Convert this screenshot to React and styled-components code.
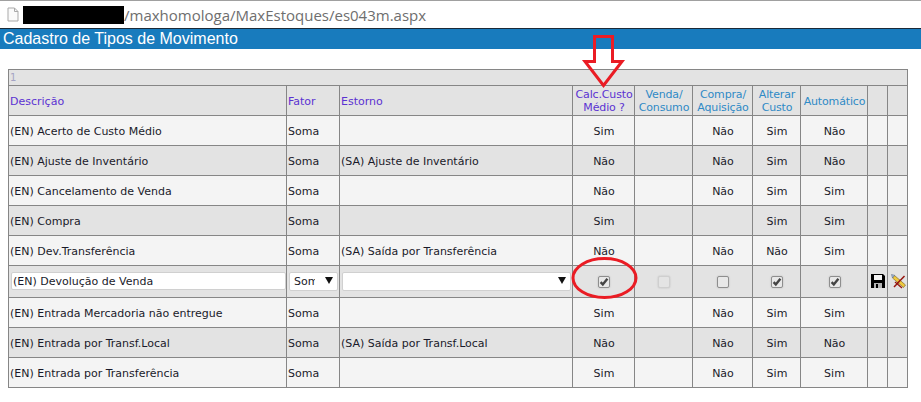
import React from 'react';
import styled, { createGlobalStyle } from 'styled-components';

const GlobalStyle = createGlobalStyle`
    html, body { margin: 0; padding: 0; background: #fff; }
    body { width: 921px; height: 402px; overflow: hidden; position: relative; }
`;

const AddressBar = styled.div`
    height: 28px;
    box-sizing: border-box;
    border-top: 1px solid #a0a0a0;
    padding: 0 0 0 7px;
    display: flex;
    align-items: center;
    font-family: "Open Sans", sans-serif;
    font-size: 15px;
    color: #6e6e6e;
`;

const Redacted = styled.span`
    width: 101px;
    height: 18px;
    margin-left: 4px;
    background: #000;
`;

const TitleBar = styled.h1`
    margin: 0;
    height: 21px;
    box-sizing: border-box;
    border-top: 1px solid #1b2a38;
    background: #187bbd;
    color: #fff;
    font-family: "Liberation Sans", sans-serif;
    font-weight: 400;
    font-size: 16px;
    line-height: 19px;
    padding-left: 3px;
`;

const Content = styled.div`
    padding: 20px 0 0 8px;
`;

const Grid = styled.table`
    border-collapse: collapse;
    table-layout: fixed;
    width: 899px;
    font-family: "DejaVu Sans", sans-serif;
    font-size: 11px;
    color: #1a1a2a;

    td, th {
        border: 1px solid #868686;
        padding: 1px 0 0 1px;
        font-weight: 400;
        overflow: hidden;
        white-space: nowrap;
    }
`;

const PagerRow = styled.tr`
    height: 16px;
    background: #e3e3e3;
    color: #a3a3c4;
    font-size: 10px;
    td { line-height: 14px; }
`;

const HeaderRow = styled.tr`
    height: 30px;
    background: #e3e3e3;
`;

const HeadCell = styled.th`
    text-align: ${({ $center }) => ($center ? 'center' : 'left')};
    color: ${({ $sorted }) => ($sorted ? '#5b32d2' : '#2f8ac6')};
    letter-spacing: ${({ $center }) => ($center ? '-0.15px' : '0')};
    line-height: 13px;
`;

const Row = styled.tr`
    height: ${({ $edit }) => ($edit ? '32px' : '30px')};
    background: ${({ $dark }) => ($dark ? '#e3e3e3' : '#f4f4f4')};
    ${({ $edit }) => $edit && 'td { padding: 0 0 1px 1px; }'}
`;

const ValueCell = styled.td`
    text-align: center;
`;

const TextInput = styled.input`
    display: block;
    box-sizing: border-box;
    width: 275px;
    height: 18px;
    margin-left: 1px;
    padding: 0 1px;
    border: 1px solid #d0d0d0;
    border-radius: 2px;
    background: #fff;
    font: 11px "DejaVu Sans", sans-serif;
    color: #1a1a2a;
`;

const SelectWrap = styled.div`
    position: relative;
    width: ${({ $w }) => $w}px;
    margin-left: 1px;
`;

const Select = styled.select`
    display: block;
    appearance: none;
    box-sizing: border-box;
    width: 100%;
    height: 19px;
    border: 1px solid #d0d0d0;
    border-radius: 2px;
    background: #fff;
    padding: 0 22px 0 4px;
    font: 11px "DejaVu Sans", sans-serif;
    color: #1a1a2a;
`;

const Arrow = styled.span`
    position: absolute;
    right: 5px;
    top: 5px;
    width: 0;
    height: 0;
    border-left: 4px solid transparent;
    border-right: 4px solid transparent;
    border-top: 7px solid #111;
`;

const Check = styled.span`
    display: inline-flex;
    align-items: center;
    justify-content: center;
    vertical-align: middle;
    box-sizing: border-box;
    width: 12px;
    height: 12px;
    border: 1px solid ${({ $disabled }) => ($disabled ? '#cfcfcf' : '#8e8e8e')};
    border-radius: 2px;
    background: ${({ $disabled }) => ($disabled ? '#e4e4e4' : '#e8e8e8')};
    box-shadow: 0 0 2px #bcbcbc;
`;

const IconCell = styled.td`
    text-align: center;
    svg { display: block; margin: 0 auto; }
`;

const Annotation = styled.svg`
    position: absolute;
    left: 0;
    top: 0;
    pointer-events: none;
`;

const PageIcon = () => (
    <svg width="12" height="15" viewBox="0 0 12 15">
        <path d="M1 1h6.5L11 4.5V14H1z" fill="#fafafa" stroke="#a9a9a9" />
        <path d="M7.5 1v3.5H11" fill="none" stroke="#a9a9a9" />
    </svg>
);

const CheckBox = ({ checked, disabled }) => (
    <Check $disabled={disabled}>
        {checked && (
            <svg width="10" height="10" viewBox="0 0 10 10">
                <path d="M1.6 5.2l2.2 2.2L8.4 1.8" fill="none" stroke="#444" strokeWidth="2.4" />
            </svg>
        )}
    </Check>
);

const SaveIcon = () => (
    <svg width="14" height="14" viewBox="0 0 14 14">
        <path d="M0 0h12l2 2v12H0z" fill="#000" />
        <rect x="3" y="1" width="8" height="5" fill="#f4f4f4" />
        <rect x="3" y="9" width="8" height="5" fill="#b4b4b4" />
        <rect x="5" y="10" width="2" height="4" fill="#000" />
    </svg>
);

const CancelIcon = () => (
    <svg width="15" height="15" viewBox="0 0 15 15">
        <path d="M13.5 2L3 13" stroke="#96150e" strokeWidth="1.5" />
        <path d="M3.5 1.5l11 9.5-2 2.5-11-9.5z" fill="#f0c83c" stroke="#6b5a20" strokeWidth=".6" />
        <path d="M.5 .5l3.2 .8-2.2 2.6z" fill="#a9c0de" stroke="#4d5d78" strokeWidth=".5" />
        <path d="M4 8l7 6" stroke="#96150e" strokeWidth="1.3" />
        <path d="M9.5 6L6.5 9.3" stroke="#96150e" strokeWidth="1.5" />
    </svg>
);

const columns = [278, 53, 233, 62, 58, 60, 48, 67, 20, 20];

const headers = [
    { label: 'Calc.Custo', second: 'Médio ?', sorted: true },
    { label: 'Venda/', second: 'Consumo' },
    { label: 'Compra/', second: 'Aquisição' },
    { label: 'Alterar', second: 'Custo' },
    { label: 'Automático' },
];

const rowsBefore = [
    { name: '(EN) Acerto de Custo Médio', est: '', vals: ['Sim', '', 'Não', 'Sim', 'Não'] },
    { name: '(EN) Ajuste de Inventário', est: '(SA) Ajuste de Inventário', vals: ['Não', '', 'Não', 'Sim', 'Não'] },
    { name: '(EN) Cancelamento de Venda', est: '', vals: ['Não', '', 'Não', 'Sim', 'Sim'] },
    { name: '(EN) Compra', est: '', vals: ['Sim', '', '', 'Sim', 'Sim'] },
    { name: '(EN) Dev.Transferência', est: '(SA) Saída por Transferência', vals: ['Não', '', 'Não', 'Não', 'Sim'] },
];

const rowsAfter = [
    { name: '(EN) Entrada Mercadoria não entregue', est: '', vals: ['Sim', '', 'Não', 'Sim', 'Sim'] },
    { name: '(EN) Entrada por Transf.Local', est: '(SA) Saída por Transf.Local', vals: ['Não', '', 'Não', 'Sim', 'Não'] },
    { name: '(EN) Entrada por Transferência', est: '', vals: ['Sim', '', 'Não', 'Sim', 'Sim'] },
];

const DataRow = ({ row, dark }) => (
    <Row $dark={dark}>
        <td>{row.name}</td>
        <td>Soma</td>
        <td>{row.est}</td>
        {row.vals.map((v, i) => <ValueCell key={i}>{v}</ValueCell>)}
        <td></td>
        <td></td>
    </Row>
);

const App = () => (
    <>
        <GlobalStyle />
        <AddressBar>
            <PageIcon />
            <Redacted />
            <span>/maxhomologa/MaxEstoques/es043m.aspx</span>
        </AddressBar>
        <TitleBar>Cadastro de Tipos de Movimento</TitleBar>
        <Content>
            <Grid>
                <colgroup>
                    {columns.map((w, i) => <col key={i} width={w} />)}
                </colgroup>
                <tbody>
                    <PagerRow><td colSpan={10}>1</td></PagerRow>
                    <HeaderRow>
                        <HeadCell $sorted>Descrição</HeadCell>
                        <HeadCell $sorted>Fator</HeadCell>
                        <HeadCell $sorted>Estorno</HeadCell>
                        {headers.map((h) => (
                            <HeadCell key={h.label} $center $sorted={h.sorted}>
                                {h.label}
                                {h.second && <><br />{h.second}</>}
                            </HeadCell>
                        ))}
                        <HeadCell />
                        <HeadCell />
                    </HeaderRow>
                    {rowsBefore.map((r, i) => <DataRow key={r.name} row={r} dark={i % 2 === 1} />)}
                    <Row $edit $dark>
                        <td><TextInput defaultValue="(EN) Devolução de Venda" /></td>
                        <td>
                            <SelectWrap $w={49}>
                                <Select defaultValue="Soma"><option>Soma</option></Select>
                                <Arrow />
                            </SelectWrap>
                        </td>
                        <td>
                            <SelectWrap $w={229}>
                                <Select defaultValue=""><option></option></Select>
                                <Arrow />
                            </SelectWrap>
                        </td>
                        <ValueCell><CheckBox checked /></ValueCell>
                        <ValueCell><CheckBox disabled /></ValueCell>
                        <ValueCell><CheckBox /></ValueCell>
                        <ValueCell><CheckBox checked /></ValueCell>
                        <ValueCell><CheckBox checked /></ValueCell>
                        <IconCell><SaveIcon /></IconCell>
                        <IconCell><CancelIcon /></IconCell>
                    </Row>
                    {rowsAfter.map((r, i) => <DataRow key={r.name} row={r} dark={i % 2 === 1} />)}
                </tbody>
            </Grid>
        </Content>
        <Annotation width="921" height="402" viewBox="0 0 921 402">
            <path d="M594.5 36.5h18v25h9.5l-18.5 24-18.5-24h9.5z" fill="none" stroke="#ea1c24" strokeWidth="3" />
            <ellipse cx="604.5" cy="278" rx="31.5" ry="19.5" fill="none" stroke="#ea1c24" strokeWidth="3" />
        </Annotation>
    </>
);

export default App;
